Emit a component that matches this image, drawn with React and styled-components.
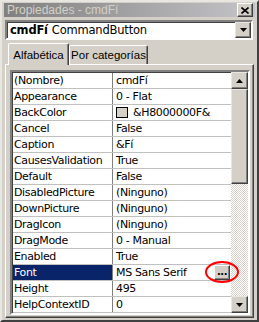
import React from "react";
import styled, { createGlobalStyle } from "styled-components";

const Global = createGlobalStyle`
  html, body { margin: 0; padding: 0; background: #d4d0c8; }
  body { font-family: "Liberation Sans", Arial, sans-serif; font-size: 11px; }
  * { box-sizing: border-box; }
`;

const Window = styled.div`
  width: 259px;
  height: 322px;
  background: #d4d0c8;
  border: 2px solid;
  border-color: #e8e6e0 #404040 #404040 #e8e6e0;
  padding: 1px 2px 2px 2px;
  display: flex;
  flex-direction: column;
`;

const TitleBar = styled.div`
  height: 19px;
  background: linear-gradient(to right, #808080, #c4c4c8);
  display: flex;
  align-items: center;
  justify-content: space-between;
  padding: 0 2px 0 3px;
`;

const TitleText = styled.span`
  color: #d4d0c8;
  font-size: 12px;
  font-family: "Liberation Sans", sans-serif;
`;

const CloseBtn = styled.div`
  width: 16px;
  height: 14px;
  background: #d4d0c8;
  border: 1px solid;
  border-color: #ffffff #404040 #404040 #ffffff;
  box-shadow: inset -1px -1px 0 #808080;
  display: flex;
  align-items: center;
  justify-content: center;
`;

const Body = styled.div`
  flex: 1;
  display: flex;
  flex-direction: column;
  padding: 3px 1px 2px 1px;
`;

const Combo = styled.div`
  height: 20px;
  background: #fff;
  border: 2px solid;
  border-color: #808080 #ffffff #ffffff #808080;
  box-shadow: inset 1px 1px 0 #404040;
  display: flex;
  align-items: center;
  padding-left: 3px;
  margin-right: 1px;
`;

const ComboText = styled.div`
  flex: 1;
  font-family: "DejaVu Sans", sans-serif;
  font-size: 11.5px;
  letter-spacing: -0.2px;
  color: #000;
  b { font-weight: bold; margin-right: 4px; }
`;

const ArrowBtn = styled.div`
  width: 16px;
  height: 16px;
  background: #d4d0c8;
  border: 1px solid;
  border-color: #e8e6e0 #404040 #404040 #e8e6e0;
  box-shadow: inset -1px -1px 0 #808080;
  display: flex;
  align-items: center;
  justify-content: center;
`;

const Tabs = styled.div`
  display: flex;
  align-items: flex-end;
  height: 22px;
  margin-top: 2px;
  padding-left: 3px;
  position: relative;
  z-index: 1;
`;

const Tab = styled.div`
  width: ${(p) => p.$w}px;
  height: ${(p) => (p.$active ? 22 : 19)}px;
  margin-bottom: ${(p) => (p.$active ? -1 : 0)}px;
  background: #d4d0c8;
  border: 1px solid;
  border-bottom: none;
  border-color: #ffffff #404040 transparent #ffffff;
  box-shadow: inset -1px 0 0 #808080;
  border-radius: 2px 2px 0 0;
  display: flex;
  align-items: center;
  justify-content: center;
  font-family: "Liberation Sans", sans-serif;
  font-size: 11.5px;
  white-space: nowrap;
  color: #000;
`;

const Panel = styled.div`
  flex: 1;
  border: 1px solid;
  border-color: #ffffff #404040 #404040 #ffffff;
  box-shadow: inset -1px -1px 0 #808080;
  padding: 5px 3px 2px 4px;
  display: flex;
`;

const Grid = styled.div`
  flex: 1;
  display: flex;
  border: 2px solid;
  border-color: #808080 #ffffff #ffffff #808080;
  box-shadow: inset 1px 1px 0 #404040;
  background: #fff;
`;

const Table = styled.div`
  flex: 1;
  display: flex;
  flex-direction: column;
  padding: 1px 0 0 1px;
`;

const Row = styled.div`
  height: 16px;
  display: flex;
  border-bottom: 1px solid #c0c0c0;
  font-family: "DejaVu Sans", sans-serif;
  font-size: 11px;
  letter-spacing: -0.35px;
  color: #000;
`;

const NameCell = styled.div`
  width: 100px;
  padding-left: 1px;
  display: flex;
  align-items: center;
  border-right: 1px solid #808080;
  background: ${(p) => (p.$sel ? "#0a246a" : "#fff")};
  color: ${(p) => (p.$sel ? "#fff" : "#000")};
`;

const ValueCell = styled.div`
  flex: 1;
  padding-left: 3px;
  display: flex;
  align-items: center;
  position: relative;
`;

const Swatch = styled.span`
  width: 12px;
  height: 11px;
  border: 1px solid #000;
  background: #d4d0c8;
  margin-right: 5px;
`;

const DotsBtn = styled.div`
  position: absolute;
  right: 1px;
  top: 0;
  width: 16px;
  height: 15px;
  background: #d4d0c8;
  border: 1px solid;
  border-color: #ffffff #404040 #404040 #ffffff;
  box-shadow: inset -1px -1px 0 #808080;
  font-size: 10px;
  font-weight: bold;
  display: flex;
  align-items: flex-end;
  justify-content: center;
  line-height: 10px;
  padding-bottom: 2px;
  letter-spacing: -0.5px;
  color: #000;
`;

const RedRing = styled.div`
  position: absolute;
  right: -8px;
  top: -4px;
  width: 34px;
  height: 22px;
  border: 2px solid #ff0000;
  border-radius: 50%;
  pointer-events: none;
`;

const Scroll = styled.div`
  width: 17px;
  display: flex;
  flex-direction: column;
  background-color: #ece9e4;
  background-image: repeating-conic-gradient(#d4d0c8 0 25%, #ffffff 0 50%);
  background-size: 2px 2px;
`;

const ScrollBtn = styled.div`
  height: 17px;
  background: #d4d0c8;
  border: 1px solid;
  border-color: #e8e6e0 #404040 #404040 #e8e6e0;
  box-shadow: inset -1px -1px 0 #808080;
  display: flex;
  align-items: center;
  justify-content: center;
`;

const Thumb = styled.div`
  height: 95px;
  background: #d4d0c8;
  border: 1px solid;
  border-color: #e8e6e0 #404040 #404040 #e8e6e0;
  box-shadow: inset -1px -1px 0 #808080;
`;

const Track = styled.div`
  flex: 1;
`;

const Arrow = ({ up }) => (
  <svg width="7" height="4" viewBox="0 0 7 4">
    {up ? (
      <path d="M3.5 0 L7 4 L0 4 Z" fill="#000" />
    ) : (
      <path d="M0 0 L7 0 L3.5 4 Z" fill="#000" />
    )}
  </svg>
);

const rows = [
  ["(Nombre)", "cmdFí"],
  ["Appearance", "0 - Flat"],
  ["BackColor", "&H8000000F&", "swatch"],
  ["Cancel", "False"],
  ["Caption", "&Fí"],
  ["CausesValidation", "True"],
  ["Default", "False"],
  ["DisabledPicture", "(Ninguno)"],
  ["DownPicture", "(Ninguno)"],
  ["DragIcon", "(Ninguno)"],
  ["DragMode", "0 - Manual"],
  ["Enabled", "True"],
  ["Font", "MS Sans Serif", "sel"],
  ["Height", "495"],
  ["HelpContextID", "0"],
];

export default function App() {
  return (
    <>
      <Global />
      <Window>
        <TitleBar>
          <TitleText>Propiedades - cmdFí</TitleText>
          <CloseBtn>
            <svg width="8" height="7" viewBox="0 0 8 7">
              <path d="M0.5 0.5 L7.5 6.5 M7.5 0.5 L0.5 6.5" stroke="#000" strokeWidth="1.6" />
            </svg>
          </CloseBtn>
        </TitleBar>
        <Body>
          <Combo>
            <ComboText>
              <b>cmdFí</b>CommandButton
            </ComboText>
            <ArrowBtn>
              <Arrow />
            </ArrowBtn>
          </Combo>
          <Tabs>
            <Tab $active $w={61}>Alfabética</Tab>
            <Tab $w={79}>Por categorías</Tab>
          </Tabs>
          <Panel>
            <Grid>
              <Table>
                {rows.map(([n, v, k]) => (
                  <Row key={n}>
                    <NameCell $sel={k === "sel"}>{n}</NameCell>
                    <ValueCell>
                      {k === "swatch" && <Swatch />}
                      {v}
                      {k === "sel" && (
                        <>
                          <DotsBtn>...</DotsBtn>
                          <RedRing />
                        </>
                      )}
                    </ValueCell>
                  </Row>
                ))}
              </Table>
              <Scroll>
                <ScrollBtn>
                  <Arrow up />
                </ScrollBtn>
                <Thumb />
                <Track />
                <ScrollBtn>
                  <Arrow />
                </ScrollBtn>
              </Scroll>
            </Grid>
          </Panel>
        </Body>
      </Window>
    </>
  );
}
